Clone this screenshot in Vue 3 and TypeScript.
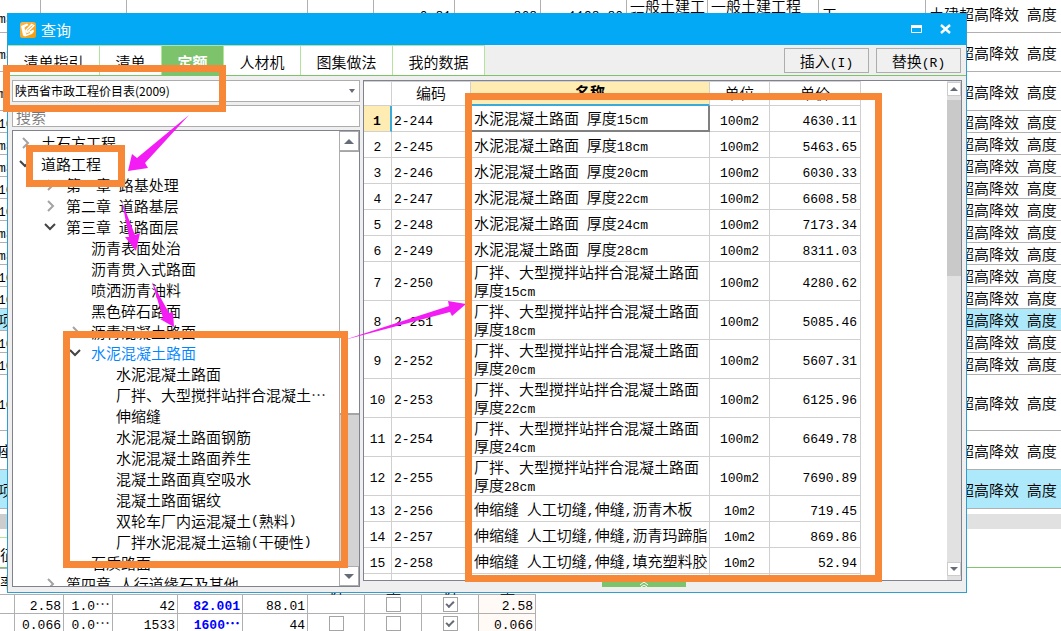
<script setup lang="ts">
import { h, ref } from 'vue'

// Sets half-width runs in the monospace face and leaves full-width text alone.
const Mixed = (props: { text: string }) =>
  props.text.split(/([\x20-\x7e]+)/).map((part, i) => (i % 2 ? h('span', { class: 'latin' }, part) : part))
Mixed.props = ['text']

interface SheetRow { unit: string; size: string; active?: boolean }
const sheetRows: SheetRow[] = [
  { unit: 'm3', size: 'tall' },
  { unit: 'm3', size: 'tall' },
  { unit: '100', size: 'short' },
  { unit: 'm3', size: 'short' },
  { unit: 'm3', size: 'short' },
  { unit: '100', size: 'short' },
  { unit: '100', size: 'short' },
  { unit: 'm3', size: 'short' },
  { unit: 'm3', size: 'short' },
  { unit: '100', size: 'short' },
  { unit: '100', size: 'short' },
  { unit: '项', size: 'short', active: true },
  { unit: '100', size: 'short' },
  { unit: '100', size: 'short' },
  { unit: '100', size: 'huge' },
  { unit: '座', size: 'tall' },
  { unit: '项', size: 'tall', active: true },
]

const detailRows = ref([
  { a: '2.58', b: '1.0…', c: '42', d: '82.001', e: '88.01', checks: [null, false, true], f: '2.58' },
  { a: '0.066', b: '0.0…', c: '1533', d: '1600…', e: '44', checks: [false, false, true], f: '0.066' },
])

const tabs = ['清单指引', '清单', '定额', '人材机', '图集做法', '我的数据']
const activeTab = ref('定额')
const keyword = ref('')

interface Node { text: string; level: number; state?: 'open' | 'closed'; selected?: boolean }
const tree: Node[] = [
  { text: '土石方工程', level: 0, state: 'closed' },
  { text: '道路工程', level: 0, state: 'open' },
  { text: '第一章 路基处理', level: 1, state: 'closed' },
  { text: '第二章 道路基层', level: 1, state: 'closed' },
  { text: '第三章 道路面层', level: 1, state: 'open' },
  { text: '沥青表面处治', level: 2 },
  { text: '沥青贯入式路面', level: 2 },
  { text: '喷洒沥青油料', level: 2 },
  { text: '黑色碎石路面', level: 2 },
  { text: '沥青混凝土路面', level: 2, state: 'closed' },
  { text: '水泥混凝土路面', level: 2, state: 'open', selected: true },
  { text: '水泥混凝土路面', level: 3 },
  { text: '厂拌、大型搅拌站拌合混凝土…', level: 3 },
  { text: '伸缩缝', level: 3 },
  { text: '水泥混凝土路面钢筋', level: 3 },
  { text: '水泥混凝土路面养生', level: 3 },
  { text: '混凝土路面真空吸水', level: 3 },
  { text: '混凝土路面锯纹', level: 3 },
  { text: '双轮车厂内运混凝土(熟料)', level: 3 },
  { text: '厂拌水泥混凝土运输(干硬性)', level: 3 },
  { text: '石质路面', level: 2 },
  { text: '第四章 人行道缘石及其他', level: 1, state: 'closed' },
]

const plant = '厂拌、大型搅拌站拌合混凝土路面 '
const items = [
  { code: '2-244', name: '水泥混凝土路面 厚度15cm', unit: '100m2', price: '4630.11' },
  { code: '2-245', name: '水泥混凝土路面 厚度18cm', unit: '100m2', price: '5463.65' },
  { code: '2-246', name: '水泥混凝土路面 厚度20cm', unit: '100m2', price: '6030.33' },
  { code: '2-247', name: '水泥混凝土路面 厚度22cm', unit: '100m2', price: '6608.58' },
  { code: '2-248', name: '水泥混凝土路面 厚度24cm', unit: '100m2', price: '7173.34' },
  { code: '2-249', name: '水泥混凝土路面 厚度28cm', unit: '100m2', price: '8311.03' },
  { code: '2-250', name: plant + '厚度15cm', unit: '100m2', price: '4280.62' },
  { code: '2-251', name: plant + '厚度18cm', unit: '100m2', price: '5085.46' },
  { code: '2-252', name: plant + '厚度20cm', unit: '100m2', price: '5607.31' },
  { code: '2-253', name: plant + '厚度22cm', unit: '100m2', price: '6125.96' },
  { code: '2-254', name: plant + '厚度24cm', unit: '100m2', price: '6649.78' },
  { code: '2-255', name: plant + '厚度28cm', unit: '100m2', price: '7690.89' },
  { code: '2-256', name: '伸缩缝 人工切缝,伸缝,沥青木板', unit: '10m2', price: '719.45' },
  { code: '2-257', name: '伸缩缝 人工切缝,伸缝,沥青玛蹄脂', unit: '10m2', price: '869.86' },
  { code: '2-258', name: '伸缩缝 人工切缝,伸缝,填充塑料胶', unit: '10m2', price: '52.94' },
]
</script>

<template>
  <div class="page">
    <main class="workspace">
      <table class="sheet">
        <colgroup>
          <col class="s1" /><col class="s2" /><col class="s3" /><col class="s4" /><col class="s5" /><col class="s2" />
          <col class="s2" /><col class="s5" /><col class="s6" /><col class="s7" /><col />
        </colgroup>
        <tbody>
          <tr class="first">
            <td class="unit"><Mixed text="m3" /></td>
            <td></td><td></td><td></td>
            <td class="num"><Mixed text="0.81" /></td>
            <td class="num"><Mixed text="868" /></td>
            <td class="num"><Mixed text="1198.80" /></td>
            <td class="top">一般土建工程</td>
            <td class="top">一般土建工程</td>
            <td>工</td>
            <td class="last"><Mixed text="土建超高降效 高度" /></td>
          </tr>
          <tr v-for="(row, i) in sheetRows" :key="i" :class="[row.size, { active: row.active }]">
            <td class="unit"><Mixed :text="row.unit" /></td>
            <td colspan="9"></td>
            <td class="last"><Mixed text="土建超高降效 高度" /></td>
          </tr>
        </tbody>
      </table>
      <div class="strip"><span class="strip-thumb"></span></div>
      <div class="detail-tabs"><span>征</span></div>
      <table class="detail">
        <thead>
          <tr>
            <th>率</th><th></th><th></th><th></th><th></th><th></th>
            <th class="low">价</th><th class="low">量</th><th class="low">价</th><th class="low">量</th>
          </tr>
        </thead>
        <tbody>
          <tr v-for="(row, i) in detailRows" :key="i">
            <td class="d0"></td>
            <td class="d1"><Mixed :text="row.a" /></td>
            <td class="d1"><Mixed :text="row.b" /></td>
            <td class="d2"><Mixed :text="row.c" /></td>
            <td class="d2 strong"><Mixed :text="row.d" /></td>
            <td class="d2"><Mixed :text="row.e" /></td>
            <td v-for="(c, j) in row.checks" :key="j" class="d3">
              <input v-if="c !== null" v-model="row.checks[j]" type="checkbox" :aria-label="`选项${j + 1}`" />
            </td>
            <td class="d4"><Mixed :text="row.f" /></td>
          </tr>
        </tbody>
      </table>
    </main>

    <section class="dialog" role="dialog" aria-label="查询">
      <header class="title">
        <svg class="logo" viewBox="0 0 16 16" aria-hidden="true">
          <defs>
            <linearGradient id="logo-fill" x1="0" y1="0" x2="1" y2="1">
              <stop offset="0" stop-color="#f8b84e" /><stop offset="1" stop-color="#f59a0c" />
            </linearGradient>
          </defs>
          <rect width="16" height="16" rx="2.500" fill="url(#logo-fill)" />
          <path d="M1 4 7 1.500 8.500 3 4.500 5.500 5.500 10.500 10.500 9l3-1.500L14 9.500l-2 2.500-7 2.500-2-1z" fill="#fff" />
          <path d="M5 8.500 11.500 1.500 15 3.500 9 9.500l-3.500 1z" fill="#fff" />
          <path d="M7 8.500 12.500 3.500M5.500 5.500l2.500-1M6 12l4-1.500" stroke="#f5aa3a" fill="none" />
        </svg>
        <h1>查询</h1>
        <button type="button" aria-label="最大化">
          <svg width="12" height="12" viewBox="0 0 12 12"><path d="M0.500 2.500h10v6h-10z" fill="none" stroke="#fff" /><path d="M0 1h11v3H0z" fill="#fff" /></svg>
        </button>
        <button type="button" aria-label="关闭">
          <svg width="12" height="12" viewBox="0 0 12 12"><path d="M1 1l9 8M10 1l-9 8" fill="none" stroke="#fff" stroke-width="2.400" /></svg>
        </button>
      </header>

      <nav class="tabs">
        <button v-for="t in tabs" :key="t" type="button" class="tab" :class="{ on: t === activeTab, wide: t.length === 4, mid: t.length === 3 }" @click="activeTab = t">{{ t }}</button>
        <div class="actions">
          <button type="button"><Mixed text="插入(I)" /></button>
          <button type="button"><Mixed text="替换(R)" /></button>
        </div>
      </nav>

      <div class="body">
        <aside class="left">
          <div class="combo">
            <select aria-label="定额库"><option>陕西省市政工程价目表(2009)</option></select>
            <svg width="6" height="4" viewBox="0 0 6 4"><path d="M0 0h6L3 4z" fill="#666b78" /></svg>
          </div>
          <input v-model="keyword" class="search" type="text" placeholder="搜索" aria-label="搜索" />
          <div class="tree-box">
            <ul class="tree">
              <li v-for="(n, i) in tree" :key="i" :class="['lv' + n.level, { selected: n.selected }]">
                <svg class="chev" width="12" height="12" viewBox="0 0 12 12">
                  <path v-if="n.state === 'closed'" d="M4 1l5 5-5 5" fill="none" stroke="#a3a3a3" stroke-width="2" />
                  <path v-if="n.state === 'open'" d="M1 3l5 5 5-5" fill="none" stroke="#444" stroke-width="2" />
                </svg>
                <Mixed :text="n.text" />
              </li>
            </ul>
            <div class="tree-scroll">
              <button type="button" aria-label="向上"><svg width="10" height="5" viewBox="0 0 10 5"><path d="M0 5h10L5 0z" fill="#666b78" /></svg></button>
              <span class="tree-thumb"></span>
              <span class="tree-track"></span>
              <button type="button" aria-label="向下"><svg width="10" height="5" viewBox="0 0 10 5"><path d="M0 0h10L5 5z" fill="#666b78" /></svg></button>
            </div>
          </div>
        </aside>

        <div class="right">
          <div class="grid-box">
            <div class="grid-view">
              <table class="grid">
                <colgroup><col class="g1" /><col class="g2" /><col class="g3" /><col class="g4" /><col class="g5" /></colgroup>
                <thead>
                  <tr><th></th><th>编码</th><th class="hot">名称</th><th>单位</th><th>单价</th></tr>
                </thead>
                <tbody>
                  <tr v-for="(r, i) in items" :key="r.code" :class="{ current: i === 0, double: r.name.startsWith(plant) }">
                    <td class="idx"><Mixed :text="String(i + 1)" /></td>
                    <td><Mixed :text="r.code" /></td>
                    <td class="name"><Mixed :text="r.name" /></td>
                    <td class="center"><Mixed :text="r.unit" /></td>
                    <td class="num"><Mixed :text="r.price" /></td>
                  </tr>
                  <tr><td></td><td></td><td></td><td></td><td></td></tr>
                </tbody>
              </table>
            </div>
            <div class="grid-scroll">
              <button type="button" aria-label="向上"><svg width="8" height="4" viewBox="0 0 8 4"><path d="M0 4h8L4 0z" fill="#666b78" /></svg></button>
              <span class="grid-thumb"></span>
              <span class="grid-track"></span>
              <button type="button" aria-label="向下"><svg width="8" height="4" viewBox="0 0 8 4"><path d="M0 0h8L4 4z" fill="#666b78" /></svg></button>
            </div>
          </div>
          <button type="button" class="handle" aria-label="展开">
            <svg width="10" height="6" viewBox="0 0 10 6"><path d="M1 4l4-3 4 3M2 6l3-2 3 2" fill="none" stroke="#fff" /></svg>
          </button>
        </div>
      </div>
    </section>

    <svg class="marks" width="1061" height="631" viewBox="0 0 1061 631" aria-hidden="true">
      <g fill="#f41cf4">
        <path d="M189 115 145 163 148 168 128 171 132 154 137 158z" />
        <path d="M122 202 135 235 140 233 136 251 125 237 129 237z" />
        <path d="M152 282 169 313 173 312 174 327 160 319 163 318z" />
        <path d="M344 340 449 306 448 301 466 304 452 316 450 312z" />
      </g>
      <g fill="none" stroke="#f78838" stroke-width="7">
        <rect x="6.500" y="68.500" width="216" height="40" />
        <rect x="29.500" y="148.500" width="92" height="35" />
        <rect x="66.500" y="334.500" width="278" height="230" />
        <rect x="468.500" y="96.500" width="410" height="482" />
      </g>
    </svg>
  </div>
</template>

<style>
html,
body {
  background: #fff;
}
.latin {
  font-family: "Liberation Mono", monospace;
  font-size: 13px;
  line-height: 13px;
  white-space: pre-wrap;
}
</style>

<style scoped>
.page {
  position: relative;
  height: 100vh;
  overflow: hidden;
  background: #fff;
  color: #000;
  font: 350 15px/18px "Noto Sans CJK SC", sans-serif;
}
.page *,
.page *::after {
  box-sizing: border-box;
}
button,
input,
select {
  font: inherit;
  color: inherit;
  margin: 0;
  padding: 0;
  border: 0;
  background: none;
}
table {
  border-spacing: 0;
  table-layout: fixed;
}

/* background sheet */
.sheet {
  width: 100%;
}
.sheet td {
  padding: 1px 3px 0;
  border-right: 1px solid #b0b0b0;
  border-bottom: 1px solid #b0b0b0;
  overflow: hidden;
  white-space: nowrap;
}
.sheet .first td {
  padding-top: 0;
  padding-bottom: 4px;
}
.sheet td.last {
  border-right: 0;
}
.sheet td.unit {
  padding: 1px 0 0;
  text-indent: -2px;
}
.sheet .first td.top {
  padding: 0 0 0 3px;
  vertical-align: top;
  line-height: 12px;
  white-space: normal;
}
.sheet .num,
.grid .num {
  text-align: right;
}
.s1 { width: 41px; }
.s2 { width: 86px; }
.s3 { width: 181px; }
.s4 { width: 66px; }
.s5 { width: 81px; }
.s6 { width: 111px; }
.s7 { width: 107px; }
.first { height: 33px; }
.short { height: 22px; }
.tall { height: 39px; }
.huge { height: 56px; }
.active { background: #aee9fb; }
.strip {
  height: 15px;
  margin-top: 5px;
  background: #e1e1e1;
}
.strip-thumb {
  display: block;
  width: 40%;
  height: 15px;
  background: #ccc;
}
.detail-tabs {
  height: 31px;
  margin-top: 8px;
  border-bottom: 1px solid #82c36f;
}
.detail-tabs span {
  display: block;
  width: 90px;
  height: 30px;
  line-height: 34px;
  border-top: 1px solid #b4e39c;
}
.detail th {
  height: 27px;
  padding: 0;
  border-bottom: 1px solid #b0b0b0;
  border-top: 1px solid #b0b0b0;
  font-weight: 350;
  text-align: left;
}
.detail th.low {
  text-align: center;
  vertical-align: bottom;
  line-height: 14px;
}
.detail {
  width: 536px;
}
.detail td {
  height: 19px;
  padding: 0 2px;
  line-height: 18px;
  border-right: 1px solid #b0b0b0;
  border-bottom: 1px solid #b0b0b0;
  text-align: right;
  white-space: nowrap;
}
.detail th:nth-child(1) { width: 15px; }
.detail th:nth-child(2),
.detail th:nth-child(3) { width: 49px; }
.detail th:nth-child(4),
.detail th:nth-child(5),
.detail th:nth-child(6) { width: 65px; }
.detail th:nth-child(n + 7) { width: 57px; }
.detail td.d3 {
  padding: 2px 0 1px;
  text-align: center;
  line-height: 0;
}
.detail td.d4 {
  background: #fffaf5;
}
.detail td.strong {
  font-weight: 700;
  color: #00f;
}
input[type="checkbox"] {
  appearance: none;
  width: 15px;
  height: 15px;
  background: #fff;
  border: 1px solid #a5a5a5;
}
input[type="checkbox"]:checked::after {
  content: "";
  display: block;
  width: 8px;
  height: 5px;
  margin: 3px 2px;
  border: solid #666b78;
  border-width: 0 0 2px 2px;
  transform: rotate(-45deg);
}

/* dialog */
.dialog {
  position: absolute;
  inset: 13px 94px 38px 7px;
  display: flex;
  flex-direction: column;
  background: #efefef;
  border: 1px solid #2e9fd0;
  border-top-color: #03a9f4;
}
.title {
  flex: none;
  display: flex;
  align-items: center;
  height: 31px;
  padding: 0 14px 0 12px;
  background: #03a9f4;
  color: #fff;
}
.logo {
  width: 16px;
  height: 16px;
  margin-right: 5px;
}
.title h1 {
  flex: 1;
  margin: 0;
  font-size: 15px;
  font-weight: 400;
}
.title button {
  width: 12px;
  height: 12px;
  margin-left: 17px;
  line-height: 0;
}
.tabs {
  flex: none;
  display: flex;
  height: 31px;
  border-bottom: 1px solid #7cc36b;
}
.tab {
  width: 62px;
  padding-top: 3px;
  background: #fff;
  border-top: 1px solid #b4e39c;
  border-right: 1px solid #b4e39c;
}
.tab.wide { width: 92px; }
.tab.mid { width: 77px; }
.tab.on {
  background: #7cc36b;
  color: #fff;
  font-weight: 700;
}
.actions {
  display: flex;
  gap: 7px;
  margin: 3px 5px 2px auto;
}
.actions button {
  width: 85px;
  background: #f0f0f0;
  border: 1px solid #adadad;
}
.body {
  flex: 1;
  min-height: 0;
  display: flex;
  gap: 3px;
  padding: 4px 4px 5px;
}
.left {
  flex: none;
  display: flex;
  flex-direction: column;
  gap: 3px;
  width: 348px;
}
.combo,
.search {
  flex: none;
  height: 22px;
  background: #fff;
  border: 1px solid #adadad;
}
.combo {
  display: flex;
  align-items: center;
  padding-right: 4px;
}
.combo select {
  flex: 1;
  appearance: none;
  padding-left: 2px;
  font-size: 12px;
  font-weight: 400;
}
.search {
  padding: 0 3px;
}
.search::placeholder {
  color: #777;
  opacity: 1;
}
.tree-box {
  flex: 1;
  min-height: 0;
  display: flex;
  background: #fff;
  border: 1px solid #80838f;
}
.tree {
  flex: 1;
  margin: 0;
  padding: 1px 0 0 6px;
  list-style: none;
  overflow: hidden;
}
.tree li {
  display: flex;
  align-items: center;
  height: 21px;
  white-space: nowrap;
}
.tree .lv1 { padding-left: 25px; }
.tree .lv2 { padding-left: 50px; }
.tree .lv3 { padding-left: 75px; }
.chev {
  flex: none;
  margin-right: 10px;
}
.selected { color: #0084ff; }
.tree-scroll {
  flex: none;
  display: flex;
  flex-direction: column;
  width: 20px;
  background: #d3d3d3;
  border-left: 1px solid #adadad;
}
.tree-scroll button {
  flex: none;
  height: 20px;
  background: #fff;
  border: 1px solid #adadad;
  border-left: 0;
  display: grid;
  place-items: center;
}
.tree-thumb {
  flex: 263;
  background: #fff;
  border-bottom: 2px solid #a5a5a5;
  border-top: 1px solid #a5a5a5;
}
.tree-track {
  flex: 152;
}
.right {
  flex: 1;
  min-width: 0;
  display: flex;
  flex-direction: column;
}
.grid-box {
  flex: 1;
  min-height: 0;
  display: flex;
  background: #fff;
  border: 1px solid #80838f;
}
.grid-view {
  flex: 1;
  overflow: hidden;
}
.grid {
  width: 497px;
}
.g1 { width: 28px; }
.g2 { width: 79px; }
.g3 { width: 239px; }
.g4 { width: 60px; }
.g5 { width: 91px; }
.grid th,
.grid td {
  height: 26px;
  padding: 0 2px;
  border-right: 1px solid #d0d0d0;
  border-bottom: 1px solid #d0d0d0;
}
.grid th {
  height: 25px;
  padding: 0 0 2px;
  font-weight: 350;
  border-top: 1px solid #d0d0d0;
}
.grid .double td {
  height: 39px;
}
.grid td.name {
  padding-left: 3px;
  padding-right: 0;
}
.grid td.num {
  padding-right: 3px;
}
.grid .idx,
.grid .center {
  padding: 0;
  text-align: center;
}
.grid th.hot {
  background: #ffecb3;
  border-bottom: 2px solid #3aa9dc;
  font-weight: 700;
}
.grid .current .idx {
  background: #ffecb3;
  border-right: 2px solid #3aa9dc;
  font-weight: 700;
}
.grid .current .name {
  border-right: 2px solid #808080;
  border-bottom: 2px solid #808080;
}
.grid-scroll {
  flex: none;
  display: flex;
  flex-direction: column;
  width: 14px;
  padding: 1px 0 4px;
  background: #e1e1e1;
}
.grid-scroll button {
  flex: none;
  height: 14px;
  background: #fff;
  border: 1px solid #ccc;
  display: grid;
  place-items: center;
}
.grid-thumb {
  flex: 177;
  margin-top: 4px;
  background: #c9c9c9;
}
.grid-track {
  flex: 287;
}
.handle {
  flex: none;
  width: 84px;
  height: 6px;
  margin-left: 239px;
  background: #7cc36b;
  display: grid;
  place-items: center;
}

/* callouts over the window */
.marks {
  position: absolute;
  top: 0;
  left: 0;
  pointer-events: none;
}
</style>
